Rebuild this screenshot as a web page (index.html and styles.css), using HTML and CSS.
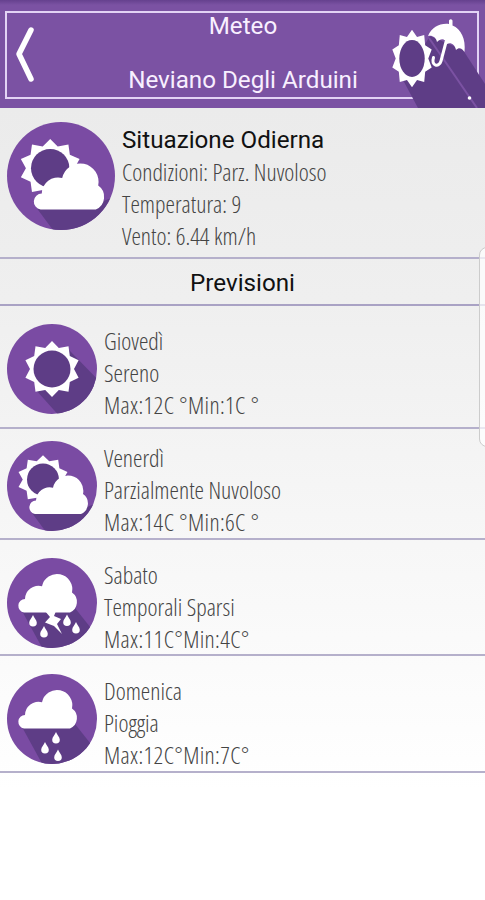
FILE: index.html
```
<!DOCTYPE html>
<html lang="it">
<head>
    <meta charset="UTF-8">
    <meta name="viewport" content="width=device-width, initial-scale=1.0">
    <title>Meteo - Neviano Degli Arduini</title>
    <link rel="stylesheet" href="styles.css">
</head>
<body>
    <!-- Shared icon shapes -->
    <svg class="defs" width="0" height="0">
        <defs>
            <clipPath id="disc"><circle cx="45" cy="45" r="45"/></clipPath>
            <path id="rays" d="M0-28L6.8-20.9L16.5-22.7L17.8-12.9L26.6-8.7L22 0L26.6 8.7L17.8 12.9L16.5 22.7L6.8 20.9L0 28L-6.8 20.9L-16.5 22.7L-17.8 12.9L-26.6 8.7L-22 0L-26.6-8.7L-17.8-12.9L-16.5-22.7L-6.8-20.9Z"/>
            <path id="cloud" d="M17 54.500A6.800 6.800 0 0 1 18 41A13.500 13.500 0 0 1 35 28.200A15.200 15.200 0 0 1 65 34.500A11.500 11.500 0 0 1 63 54.500Z"/>
            <path id="drop" d="M0-6C1-3 3.8-1 3.8 1.8A3.8 3.8 0 0 1-3.8 1.8C-3.8-1-1-3 0-6Z"/>
            <symbol id="partly" viewBox="0 0 90 90">
                <g clip-path="url(#disc)">
                    <rect class="light" width="90" height="90"/>
                    <path class="dark" d="M25 72L42 95H95V60L80 66Z"/>
                </g>
                <use href="#rays" class="white" transform="translate(36 38.5) scale(.92 .87)"/>
                <circle class="dark" cx="36" cy="38.500" r="16"/>
                <use href="#cloud" class="white" transform="translate(11 18.500)"/>
            </symbol>
        </defs>
    </svg>

    <header class="header">
        <div class="frame">
            <svg class="back" viewBox="0 0 20 58"><path d="M16 4L4 28L16 53"/></svg>
            <h1>Meteo</h1>
            <h1>Neviano Degli Arduini</h1>
        </div>
        <svg class="logo" viewBox="385 0 100 108">
            <path class="dark" d="M403 80L418 108H485V84L463 50L430 36Z"/>
            <path class="seam" d="M429 38L477 108"/>
            <circle class="white" cx="469.500" cy="98" r="1.800"/>
            <use href="#rays" class="white" transform="translate(412 58.500) scale(.74 1.030)"/>
            <ellipse class="dark" cx="412" cy="58.500" rx="12.700" ry="18.500"/>
            <path class="white" d="M428 36C432 27 440 23 449 24V20.500Q450.800 18 452.500 20.500V25.500C461 29 466 39 464.500 52C462 48 459 47 456 50C455 45 451 42 447 44C445 38 441 38 437 42C436 37 432 35 428 36Z"/>
            <path class="handle" d="M446 42L441 61C439 68 431 66 433.500 57.500"/>
        </svg>
    </header>

    <section class="row today">
        <svg class="icon"><use href="#partly"/></svg>
        <div class="text">
            <h2>Situazione Odierna</h2>
            <p>Condizioni: Parz. Nuvoloso</p>
            <p>Temperatura: 9</p>
            <p>Vento: 6.44 km/h</p>
        </div>
    </section>

    <h2 class="title">Previsioni</h2>

    <section class="row thursday">
        <svg class="icon" viewBox="0 0 90 90">
            <g clip-path="url(#disc)">
                <rect class="light" width="90" height="90"/>
                <path class="dark" d="M28 65L55 95H95V60L62 26Z"/>
            </g>
            <use href="#rays" class="white" transform="translate(45 45)"/>
            <circle class="dark" cx="45" cy="45" r="18.500"/>
        </svg>
        <div class="text">
            <p>Giovedì</p>
            <p>Sereno</p>
            <p class="temps">Max:12C °Min:1C °</p>
        </div>
    </section>

    <section class="row friday">
        <svg class="icon"><use href="#partly"/></svg>
        <div class="text">
            <p>Venerdì</p>
            <p>Parzialmente Nuvoloso</p>
            <p class="temps">Max:14C °Min:6C °</p>
        </div>
    </section>

    <section class="row saturday">
        <svg class="icon" viewBox="0 0 90 90">
            <g clip-path="url(#disc)">
                <rect class="light" width="90" height="90"/>
                <path class="dark" d="M15 53L38 95H95V84L68 50Z"/>
            </g>
            <g class="white">
                <use href="#cloud"/>
                <path d="M38 53L43 59L38 64.500L47 68L55 76L50 66L54 61L47 58L49 53Z"/>
                <use href="#drop" x="26" y="63"/>
                <use href="#drop" x="37" y="74"/>
                <use href="#drop" x="60" y="62.500"/>
                <use href="#drop" x="69" y="70"/>
            </g>
        </svg>
        <div class="text">
            <p>Sabato</p>
            <p>Temporali Sparsi</p>
            <p class="temps">Max:11C°Min:4C°</p>
        </div>
    </section>

    <section class="row sunday">
        <svg class="icon" viewBox="0 0 90 90">
            <g clip-path="url(#disc)">
                <rect class="light" width="90" height="90"/>
                <path class="dark" d="M15 53L38 95H95V84L68 50Z"/>
            </g>
            <g class="white">
                <use href="#cloud"/>
                <use href="#drop" x="49" y="64"/>
                <use href="#drop" x="38" y="74"/>
                <use href="#drop" x="51" y="81.500"/>
            </g>
        </svg>
        <div class="text">
            <p>Domenica</p>
            <p>Pioggia</p>
            <p class="temps">Max:12C°Min:7C°</p>
        </div>
    </section>

    <div class="drawer"></div>
</body>
</html>
```
FILE: styles.css
```
* {
    box-sizing: border-box;
}

body {
    margin: 0;
    height: 900px;
    overflow: hidden;
    position: relative;
    background: linear-gradient(#ebebeb 108px, #efefef 300px, #ffffff 790px);
    font-family: "Open Sans", sans-serif;
    color: #444;
}

h1, h2, p {
    margin: 0;
    font-weight: 400;
    white-space: nowrap;
}

svg {
    display: block;
    flex: none;
}

.defs {
    position: absolute;
}

.light { fill: #7a4ba3; }
.dark { fill: #5e3d86; }
.white { fill: #fff; }

.header {
    position: relative;
    height: 108px;
    padding: 11px 6px 9px 5px;
    background: linear-gradient(#65418e, #7b52a3 5px);
}

.frame {
    height: 88px;
    border: 2px solid #e3d3f5;
    display: grid;
    grid-template-rows: 26px 1fr;
    text-align: center;
    position: relative;
}

.frame h1 {
    font: 24.2px/26px Roboto, sans-serif;
    color: #f8efff;
    padding-left: 2px;
}

.frame h1:last-child {
    align-self: end;
    padding-bottom: 4px;
}

.back {
    position: absolute;
    left: 8px;
    top: 13px;
    width: 20px;
    height: 58px;
    fill: none;
    stroke: #fff;
    stroke-width: 5.5;
    stroke-linecap: round;
    stroke-linejoin: round;
}

.logo {
    position: absolute;
    right: 0;
    top: 0;
    width: 100px;
    height: 108px;
}

.seam {
    fill: none;
    stroke: #7b52a3;
    stroke-width: 2;
}

.handle {
    fill: none;
    stroke: #fff;
    stroke-width: 3;
    stroke-linecap: round;
}

.row {
    display: flex;
    align-items: flex-start;
    gap: 7px;
    padding-left: 7px;
    border-bottom: 2px solid #b5b0cb;
}

.icon {
    width: 90px;
    height: 90px;
}

.text {
    padding-top: 1px;
}

.text p {
    font-size: 23.9px;
    line-height: 31.8px;
    font-weight: 300;
    font-stretch: 75%;
}

.text .temps {
    letter-spacing: 0.35px;
}

h2 {
    font: 24.2px/32px Roboto, sans-serif;
    color: #111;
}

.today {
    height: 151px;
    padding-top: 14px;
}

.today .icon {
    width: 108px;
    height: 108px;
}

.today .text {
    padding-top: 2px;
}

.title {
    height: 47px;
    line-height: 48px;
    text-align: center;
    border-bottom: 2px solid #a9a2c4;
}

.thursday {
    height: 123px;
    padding-top: 18px;
}

.friday {
    height: 111px;
    padding-top: 12px;
}

.saturday {
    height: 116px;
    padding-top: 18px;
}

.sunday {
    height: 117px;
    padding-top: 18px;
}

/* edge handle, runs off the right side */
.drawer {
    position: absolute;
    left: 479px;
    top: 247px;
    width: 20px;
    height: 200px;
    border: 1px solid #ccc;
    border-radius: 8px;
    background: rgba(255, 255, 255, 0.7);
}
```
